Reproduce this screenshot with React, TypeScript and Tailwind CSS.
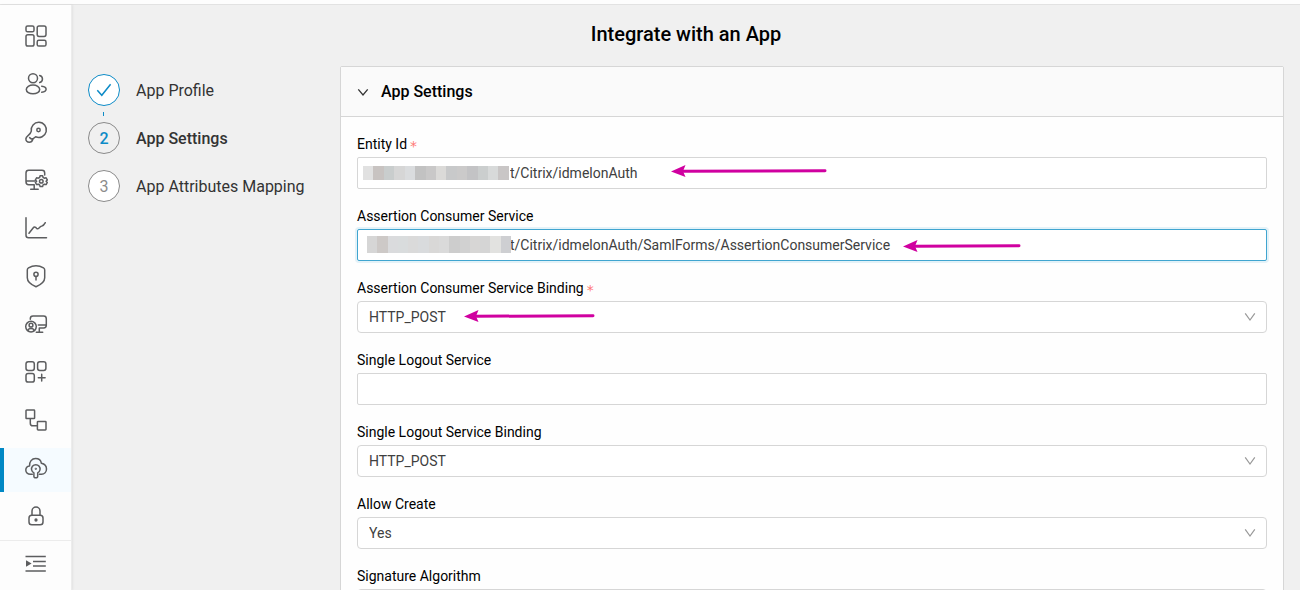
import type { ReactNode } from 'react';
import { useState } from 'react';

type NavItem = { label: string; icon: ReactNode };

const gear =
  'M16.1 7.800h2.500l.5 1.700 1.300.7 1.700-.4 1.200 2.100-1.200 1.300 1.200 1.300-1.200 2.100-1.700-.4-1.300.7-.5 1.700h-2.500l-.5-1.700-1.300-.7-1.700.4-1.200-2.100 1.200-1.300-1.200-1.300 1.200-2.100 1.700.4 1.300-.7z';

const navItems: NavItem[] = [
  {
    label: 'Dashboard',
    icon: (
      <>
        <rect x="2" y="2" width="8" height="5.8" rx="1.6" />
        <rect x="13.2" y="2" width="8.8" height="10.4" rx="1.8" />
        <rect x="2" y="10.8" width="8" height="11.3" rx="1.8" />
        <rect x="13.2" y="16.3" width="8.8" height="5.8" rx="1.6" />
      </>
    ),
  },
  {
    label: 'Users',
    icon: (
      <>
        <circle cx="9" cy="6.3" r="4.5" />
        <ellipse cx="9" cy="17.4" rx="6.7" ry="4.4" />
        <path d="M15.7 3.600a3.600 3.600 0 0 1 0 7M17.700 14.200c2.800.4 4.400 1.600 4.400 3s-1.600 2.600-4.400 3" />
      </>
    ),
  },
  {
    label: 'Keys',
    icon: (
      <>
        <path d="M7.300 11.200a7.600 7.600 0 1 1 4.300 5.600c-1 .6-2.200 1.200-2.700 2.200-.4 1.500-1.300 3.300-3.600 3.300-2.200 0-3.500-1.500-3.400-3.400.1-3.300 4.600-3.700 5.400-7.700z" />
        <circle cx="14.500" cy="10" r="1.700" />
        <path d="M5.600 17.600l1.600 1.300 1.600-.1" />
      </>
    ),
  },
  {
    label: 'Devices',
    icon: (
      <>
        <path d="M20.700 7V5c0-1.800-.9-2.700-2.700-2.700H4.700C2.900 2.300 2 3.200 2 5v8.700c0 2 .9 3 2.700 3h5.500v4.600M2 13.100h8.800M6.700 21.300h7.500" />
        <path d={gear} />
        <circle cx="17.300" cy="13.200" r="1.800" />
      </>
    ),
  },
  {
    label: 'Reports',
    icon: (
      <path d="M2 1.700v17.500c0 1.800.8 2.500 2.500 2.500h18M5 17.300l4.300-5.600c.7-.9 1.500-1 2.300-.3l1 .9c.8.6 1.500.6 2.200-.1l1.500-1.400c1.600-1.200 2.900 0 5-4.100" />
    ),
  },
  {
    label: 'Security',
    icon: (
      <>
        <path d="M12 1.700c2.600 0 5.500 1 7.500 2.200.8.500 1.200 1.100 1.200 2v7.800c0 4.300-4.700 7.300-8.700 9-4-1.700-8.700-4.700-8.700-9V5.900c0-.9.4-1.500 1.200-2C6.500 2.700 9.400 1.700 12 1.700z" />
        <circle cx="12" cy="10.300" r="2.100" />
        <path d="M12 12.500v3.500" />
      </>
    ),
  },
  {
    label: 'Workstations',
    icon: (
      <>
        <path d="M6.300 7.200V6.700C6.300 4.900 7.200 4 9 4h10.600c1.800 0 2.700.9 2.700 2.700v6.600c0 1.800-.9 2.700-2.700 2.700h-4.300v4.300M14.300 13h8M12.300 20.300h6.400" />
        <circle cx="7" cy="14.600" r="5.300" />
        <circle cx="7" cy="13.200" r="1.900" />
        <path d="M3.900 18.600c.2-1.500 1.300-2 3.100-2s2.900.5 3.100 2" />
      </>
    ),
  },
  {
    label: 'Add app',
    icon: (
      <>
        <rect x="2" y="1.800" width="8.300" height="8.700" rx="2.200" />
        <rect x="13.600" y="1.800" width="8.300" height="8.700" rx="2.200" />
        <rect x="2" y="13.400" width="8.300" height="8.700" rx="2.200" />
        <path d="M17.700 14.300v6.800M14.300 17.700h6.800" />
      </>
    ),
  },
  {
    label: 'Workflows',
    icon: (
      <>
        <rect x="2" y="2" width="8.600" height="8.600" rx=".7" />
        <rect x="13.400" y="13.400" width="8.600" height="8.600" rx=".7" />
        <path d="M6.300 10.800v4.400c0 1.700.9 2.600 2.600 2.600h4.300" />
      </>
    ),
  },
  {
    label: 'Single sign-on',
    icon: (
      <>
        <path d="M8.300 18.300H6.500c-2.700 0-4.700-1.800-4.700-4.200 0-2.200 1.600-4 3.800-4.200C5.100 5.700 8 2.500 11.500 2.500c3 0 5.400 1.800 5.900 4.800 2.900.6 5.100 3 5.100 5.800 0 2.900-2.200 5.200-5 5.200H15.300" />
        <path d="M9.900 16.800a4.300 4.300 0 1 1 3.800 0v3.400c0 2.200-3.800 2.200-3.800 0z" />
        <circle cx="11.800" cy="12.800" r=".4" />
      </>
    ),
  },
  {
    label: 'Access',
    icon: (
      <>
        <rect x="5" y="11.200" width="14" height="9.600" rx="2.800" />
        <path d="M8 11V7a4 4 0 0 1 8 0v4" />
        <circle cx="12" cy="16" r=".9" fill="currentColor" />
      </>
    ),
  },
];

function Icon({ children }: { children: ReactNode }) {
  return (
    <svg
      viewBox="0 0 24 24"
      className="size-6"
      fill="none"
      stroke="currentColor"
      strokeWidth="1.5"
      strokeLinecap="round"
      strokeLinejoin="round"
      aria-hidden="true"
    >
      {children}
    </svg>
  );
}

function Sidebar() {
  return (
    <nav
      aria-label="Main"
      className="relative flex w-18 shrink-0 flex-col border-r border-[#ececec] bg-[#fdfdfd] text-[#5c5d5f] shadow-[1px_0_2px_rgba(0,0,0,0.06)]"
    >
      <div className="flex flex-col gap-1 border-b border-[#ececec] pt-[11px]">
        {navItems.map((item) => {
          const active = item.label === 'Single sign-on';
          return (
            <button
              key={item.label}
              type="button"
              aria-label={item.label}
              aria-current={active ? 'page' : undefined}
              className={
                active
                  ? 'flex h-11 items-center justify-center border-l-4 border-[#0088c5] bg-[#f5fbff] pr-[3px] pb-1'
                  : 'flex h-11 items-center justify-center pl-px pb-1'
              }
            >
              <Icon>{item.icon}</Icon>
            </button>
          );
        })}
      </div>
      <button type="button" aria-label="Expand menu" className="flex h-12 items-center justify-center pl-px pb-0.5">
        <svg viewBox="0 0 24 24" className="size-6" aria-hidden="true">
          <path
            d="M1.500 4.500h20.300M9 9.500h12.800M9 14h12.800M1.500 19h20.300"
            stroke="currentColor"
            strokeWidth="1.600"
          />
          <path d="M2 8.200v6.600l5.600-3.300z" fill="currentColor" />
        </svg>
      </button>
    </nav>
  );
}

function Steps() {
  return (
    <ol className="flex w-63 shrink-0 flex-col gap-4 pt-2 text-base leading-[26px] text-[#333]">
      <li className="relative flex items-center gap-4">
        <span className="flex size-8 items-center justify-center rounded-full border border-[#0d8bc7] bg-white text-[#0d8bc7]">
          <svg viewBox="0 0 16 16" className="size-4" fill="none" stroke="currentColor" strokeWidth="1.500" aria-hidden="true">
            <path d="M1.300 8.300l4.500 5L14.600 2.300" />
          </svg>
        </span>
        <span className="pt-0.5">App Profile</span>
        <span className="absolute top-[38px] left-[15px] h-1 w-px bg-[#0d8bc7]" />
      </li>
      <li className="flex items-center gap-4 font-medium" aria-current="step">
        <span className="flex size-8 items-center justify-center rounded-full border border-[#8a8a8a] pt-px text-[#0d8bc7]">
          2
        </span>
        <span className="pt-0.5">App Settings</span>
      </li>
      <li className="flex items-center gap-4">
        <span className="flex size-8 items-center justify-center rounded-full border border-[#8a8a8a] bg-white pt-px text-[#8c8c8c]">
          3
        </span>
        <span className="pt-0.5">App Attributes Mapping</span>
      </li>
    </ol>
  );
}

function FieldLabel({ id, required, children }: { id: string; required?: boolean; children: ReactNode }) {
  return (
    <label htmlFor={id} className="flex h-6 items-start gap-[3px] text-sm leading-[22px] text-black">
      {children}
      {required && <span className="font-['DejaVu_Sans',sans-serif] leading-[26px] text-[#ff7875]">*</span>}
    </label>
  );
}

function Arrow({ length, className }: { length: number; className: string }) {
  return (
    <svg
      width={length}
      height="12"
      viewBox={`0 0 ${length} 12`}
      className={`pointer-events-none absolute ${className}`}
      aria-hidden="true"
    >
      <path d="M0 6.500L14.500 0 12 6.300l2.500 5.700z" fill="#d000a0" />
      <path d={`M11 6.300L${length - 2} 5.700`} stroke="#d000a0" strokeWidth="3" strokeLinecap="round" />
    </svg>
  );
}

function Redaction({ colors, className }: { colors: string[]; className: string }) {
  return (
    <span className={`pointer-events-none absolute flex ${className}`} aria-hidden="true">
      {colors.map((color, i) => (
        <span key={i} className="flex-1" style={{ backgroundColor: color }} />
      ))}
    </span>
  );
}

function TextField({
  id,
  label,
  required,
  initial = '',
  highlighted,
  children,
}: {
  id: string;
  label: string;
  required?: boolean;
  initial?: string;
  highlighted?: boolean;
  children?: ReactNode;
}) {
  const [value, setValue] = useState(initial);
  const padding = children ? 'pl-38' : 'pl-[11px]';
  const frame = highlighted
    ? 'border-[#40a5d0] shadow-[0_0_0_2px_rgba(0,136,197,0.1)]'
    : 'border-[#d6d6d6]';
  return (
    <div>
      <FieldLabel id={id} required={required}>
        {label}
      </FieldLabel>
      <div className="relative">
        <input
          id={id}
          type="text"
          value={value}
          onChange={(e) => setValue(e.target.value)}
          className={`block h-8 w-full rounded-xs border bg-white text-sm text-[#404040] outline-none ${padding} ${frame}`}
        />
        {children}
      </div>
    </div>
  );
}

function SelectField({
  id,
  label,
  required,
  options,
  children,
}: {
  id: string;
  label: string;
  required?: boolean;
  options: string[];
  children?: ReactNode;
}) {
  return (
    <div>
      <FieldLabel id={id} required={required}>
        {label}
      </FieldLabel>
      <div className="relative">
        <select
          id={id}
          className="block h-8 w-full appearance-none rounded border border-[#d6d6d6] bg-white pr-8 pl-[11px] text-sm text-[#404040] outline-none"
        >
          {options.map((option) => (
            <option key={option}>{option}</option>
          ))}
        </select>
        <svg
          viewBox="0 0 12 12"
          className="pointer-events-none absolute top-[10px] right-[11px] size-3"
          fill="none"
          stroke="#999"
          strokeWidth="1.200"
          aria-hidden="true"
        >
          <path d="M1.200 2.300L6 9l4.800-6.700" />
        </svg>
        {children}
      </div>
    </div>
  );
}

const entityBlocks = [
  '#e1e1e1', '#c8c3c1', '#c9cdcd', '#d6d6d6', '#dadcde', '#c2c2c2', '#c9c8c8',
  '#dbdad8', '#c8c9ca', '#cbcaca', '#c3c3c5', '#cbcece', '#d8dada', '#c9c6c6',
];

const serviceBlocks = [
  '#d6d6d6', '#cdc9c7', '#dadbdd', '#d9dcdd', '#dadada', '#d9dbdd', '#d9d8d7',
  '#dadada', '#cdcdcd', '#d1d1d1', '#d7d6d5', '#d5d5d5', '#e2e2e0', '#cecfd2',
];

export default function App() {
  return (
    <div className="flex h-screen flex-col overflow-hidden bg-[#f0f0f0] font-[Roboto,sans-serif]">
      <header className="h-[5px] shrink-0 border-b border-[#e2e2e2] bg-[#fdfdfd]" />
      <div className="flex min-h-0 flex-1">
        <Sidebar />
        <main className="min-w-0 flex-1 px-4">
          <h1 className="pt-[15px] pb-[18px] text-center text-xl font-medium text-black">Integrate with an App</h1>
          <div className="flex items-start">
            <Steps />
            <section className="min-w-0 flex-1 rounded-xs border border-[#d6d6d6] bg-[#fefefe]">
              <h2 className="border-b border-[#d6d6d6] bg-[#fafafa]">
                <button
                  type="button"
                  aria-expanded="true"
                  className="flex h-[49px] w-full items-center gap-3 px-4 text-base font-medium text-black"
                >
                  <svg
                    viewBox="0 0 12 12"
                    className="size-3"
                    fill="none"
                    stroke="#333"
                    strokeWidth="1.300"
                    aria-hidden="true"
                  >
                    <path d="M1.300 3.300L6 9l4.700-5.700" />
                  </svg>
                  App Settings
                </button>
              </h2>
              <form className="flex flex-col gap-4 p-4">
                <TextField id="entity-id" label="Entity Id" required initial="t/Citrix/idmelonAuth">
                  <Redaction colors={entityBlocks} className="top-[9px] left-[6px] h-[14px] w-[146px]" />
                  <Arrow length={156} className="top-2 left-[314px]" />
                </TextField>
                <TextField
                  id="acs"
                  label="Assertion Consumer Service"
                  initial="t/Citrix/idmelonAuth/SamlForms/AssertionConsumerService"
                  highlighted
                >
                  <Redaction colors={serviceBlocks} className="top-[7px] left-[10px] h-[17px] w-[144px]" />
                  <Arrow length={118} className="top-[11px] left-[546px]" />
                </TextField>
                <SelectField
                  id="acs-binding"
                  label="Assertion Consumer Service Binding"
                  required
                  options={['HTTP_POST', 'HTTP_REDIRECT']}
                >
                  <Arrow length={131} className="top-[9px] left-[107px]" />
                </SelectField>
                <TextField id="slo" label="Single Logout Service" />
                <SelectField
                  id="slo-binding"
                  label="Single Logout Service Binding"
                  options={['HTTP_POST', 'HTTP_REDIRECT']}
                />
                <SelectField id="allow-create" label="Allow Create" options={['Yes', 'No']} />
                <SelectField id="signature" label="Signature Algorithm" options={['RSA_SHA256', 'RSA_SHA512']} />
              </form>
            </section>
          </div>
        </main>
      </div>
    </div>
  );
}
